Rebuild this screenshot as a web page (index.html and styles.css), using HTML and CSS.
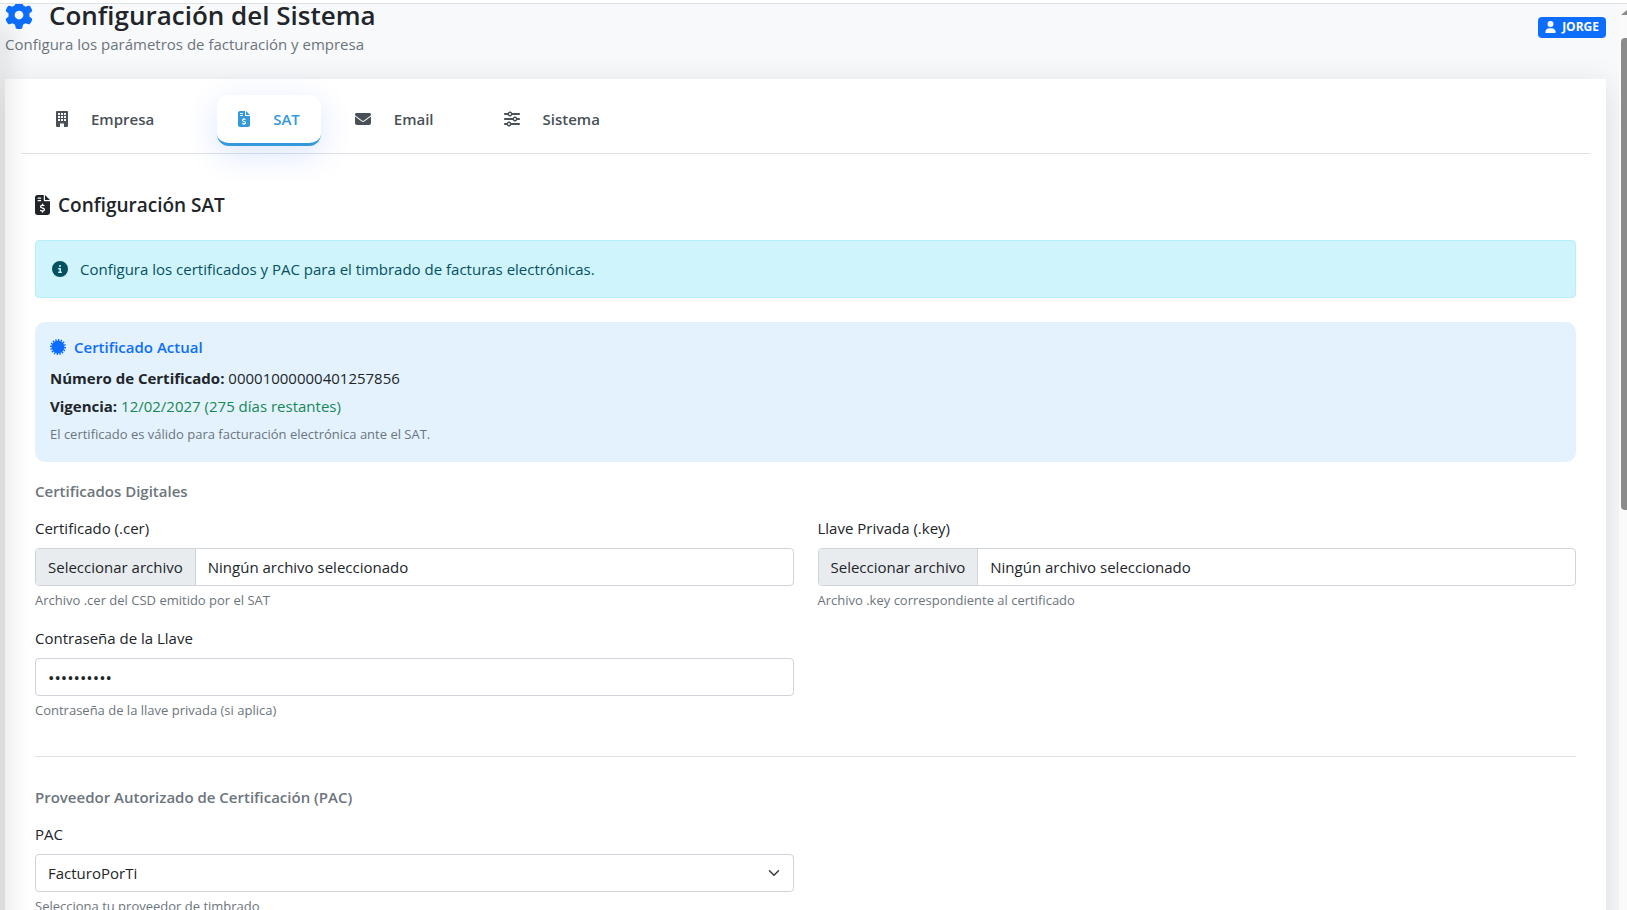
FILE: index.html
```html
<!DOCTYPE html>
<html lang="es">
<head>
    <meta charset="UTF-8">
    <meta name="viewport" content="width=device-width, initial-scale=1.0">
    <title>Configuración del Sistema</title>
    <link rel="stylesheet" href="styles.css">
</head>
<body>
    <!-- Shared icons -->
    <svg class="sprite" aria-hidden="true">
        <symbol id="icon-invoice" viewBox="0 0 384 512">
            <path d="M64 0C28.7 0 0 28.7 0 64V448c0 35.3 28.7 64 64 64H320c35.3 0 64-28.7 64-64V160H256c-17.7 0-32-14.3-32-32V0H64zM256 0V128H384L256 0zM64 80c0-8.800 7.200-16 16-16h64c8.800 0 16 7.200 16 16s-7.200 16-16 16H80c-8.800 0-16-7.200-16-16zm0 64c0-8.800 7.200-16 16-16h64c8.800 0 16 7.200 16 16s-7.200 16-16 16H80c-8.800 0-16-7.200-16-16zm128 72c8.800 0 16 7.200 16 16v17.300c8.500 1.200 16.700 3.100 24.100 5.100c8.500 2.300 13.600 11 11.300 19.600s-11 13.600-19.600 11.300c-11.100-3-22-5.200-32.100-5.300c-8.400-.1-17.400 1.800-23.600 5.500c-5.700 3.400-8.100 7.300-8.100 12.800c0 3.700 1.300 6.500 7.300 10.100c6.900 4.100 16.600 7.100 29.200 10.900l.5 .1c11.300 3.400 25.300 7.600 36.300 14.600c12.100 7.600 22.400 19.700 22.700 38.200c.3 19.300-9.600 33.300-22.900 41.600c-7.700 4.800-16.400 7.600-25.100 9.100V440c0 8.800-7.200 16-16 16s-16-7.200-16-16V422.200c-11.200-2.100-21.700-5.700-30.900-8.900c-2.100-.7-4.200-1.400-6.200-2.100c-8.400-2.800-12.900-11.900-10.100-20.200s11.900-12.900 20.200-10.100c2.500 .8 4.800 1.600 7.100 2.400c13.600 4.600 24.600 8.400 36.300 8.700c9.100 .3 17.900-1.700 23.700-5.300c5.100-3.200 7.900-7.300 7.800-14c-.1-4.600-1.800-7.800-7.700-11.600c-6.800-4.300-16.500-7.400-29-11.200l-1.600-.5c-11-3.300-24.300-7.300-34.800-13.700c-12-7.200-22.600-18.900-22.700-37.300c-.1-19.400 10.800-32.800 23.800-40.500c7.500-4.400 15.800-7.200 24.100-8.700V232c0-8.800 7.200-16 16-16z"/>
        </symbol>
    </svg>

    <div class="window">
        <main class="page">
            <header class="page-header">
                <div>
                    <h1>
                        <svg class="icon-gear" viewBox="0 0 512 512" aria-hidden="true"><path d="M495.9 166.6c3.200 8.700 .5 18.400-6.400 24.600l-43.300 39.400c1.100 8.300 1.700 16.800 1.700 25.400s-.6 17.100-1.700 25.400l43.300 39.400c6.900 6.200 9.600 15.900 6.400 24.600c-4.400 11.900-9.700 23.300-15.800 34.300l-4.700 8.100c-6.600 11-14 21.400-22.100 31.200c-5.900 7.200-15.700 9.600-24.500 6.800l-55.700-17.700c-13.400 10.300-28.200 18.900-44 25.400l-12.500 57.100c-2 9.100-9 16.300-18.200 17.800c-13.800 2.300-28 3.500-42.500 3.500s-28.700-1.200-42.500-3.500c-9.200-1.500-16.200-8.700-18.200-17.800l-12.500-57.100c-15.800-6.500-30.600-15.100-44-25.400L83.100 425.900c-8.800 2.800-18.600 .3-24.500-6.800c-8.100-9.800-15.500-20.200-22.100-31.200l-4.700-8.100c-6.100-11-11.400-22.400-15.800-34.300c-3.200-8.700-.5-18.400 6.400-24.600l43.300-39.400C64.600 273.100 64 264.600 64 256s.6-17.100 1.700-25.400L22.400 191.200c-6.900-6.200-9.600-15.900-6.400-24.600c4.400-11.900 9.700-23.300 15.800-34.300l4.700-8.100c6.600-11 14-21.400 22.100-31.200c5.900-7.200 15.700-9.600 24.500-6.800l55.700 17.700c13.400-10.300 28.200-18.900 44-25.400l12.500-57.100c2-9.100 9-16.300 18.200-17.800C227.300 1.200 241.500 0 256 0s28.700 1.200 42.500 3.500c9.200 1.500 16.200 8.700 18.200 17.800l12.500 57.100c15.800 6.500 30.600 15.100 44 25.400l55.700-17.700c8.800-2.800 18.600-.3 24.500 6.800c8.100 9.800 15.500 20.200 22.100 31.200l4.700 8.100c6.100 11 11.400 22.400 15.800 34.300zM256 336a80 80 0 1 0 0-160 80 80 0 1 0 0 160z"/></svg>
                        Configuración del Sistema
                    </h1>
                    <p class="subtitle">Configura los parámetros de facturación y empresa</p>
                </div>
                <span class="user-badge">
                    <svg viewBox="0 0 448 512" aria-hidden="true"><path d="M224 256A128 128 0 1 0 224 0a128 128 0 1 0 0 256zm-45.700 48C79.800 304 0 383.800 0 482.300C0 498.700 13.300 512 29.700 512H418.300c16.400 0 29.700-13.300 29.700-29.700C448 383.800 368.200 304 269.700 304H178.300z"/></svg>
                    JORGE
                </span>
            </header>

            <div class="card">
                <div class="tabs" role="tablist">
                    <button class="tab tab-first" type="button" role="tab">
                        <svg class="icon-narrow" viewBox="0 0 12 16" aria-hidden="true"><path fill-rule="evenodd" d="M1 0h10a1 1 0 0 1 1 1v14a1 1 0 0 1-1 1H8v-3.500H4V16H1a1 1 0 0 1-1-1V1a1 1 0 0 1 1-1zM2 2v2h2V2zM5 2v2h2V2zM8 2v2h2V2zM2 5v2h2V5zM5 5v2h2V5zM8 5v2h2V5zM2 8v2h2V8zM5 8v2h2V8zM8 8v2h2V8z"/></svg>
                        Empresa
                    </button>
                    <button class="tab active" type="button" role="tab" aria-selected="true">
                        <svg class="icon-narrow" aria-hidden="true"><use href="#icon-invoice"/></svg>
                        SAT
                    </button>
                    <button class="tab" type="button" role="tab">
                        <svg class="icon" viewBox="0 0 512 512" aria-hidden="true"><path d="M48 64C21.500 64 0 85.500 0 112c0 15.100 7.100 29.300 19.200 38.400L236.800 313.600c11.400 8.500 27 8.500 38.400 0L492.800 150.400c12.100-9.100 19.200-23.300 19.200-38.400c0-26.500-21.500-48-48-48H48zM0 176V384c0 35.300 28.700 64 64 64H448c35.300 0 64-28.700 64-64V176L294.400 339.200c-22.800 17.100-54 17.100-76.800 0L0 176z"/></svg>
                        Email
                    </button>
                    <button class="tab" type="button" role="tab">
                        <svg class="icon" viewBox="0 0 512 512" aria-hidden="true"><path d="M0 416c0 17.700 14.300 32 32 32l54.700 0c12.300 28.300 40.500 48 73.300 48s61-19.700 73.300-48L480 448c17.700 0 32-14.300 32-32s-14.300-32-32-32l-246.700 0c-12.300-28.300-40.500-48-73.300-48s-61 19.700-73.300 48L32 384c-17.700 0-32 14.300-32 32zm128 0a32 32 0 1 1 64 0 32 32 0 1 1 -64 0zM320 256a32 32 0 1 1 64 0 32 32 0 1 1 -64 0zm32-80c-32.800 0-61 19.700-73.300 48L32 224c-17.700 0-32 14.300-32 32s14.300 32 32 32l246.700 0c12.300 28.300 40.500 48 73.300 48s61-19.700 73.300-48l54.700 0c17.700 0 32-14.300 32-32s-14.300-32-32-32l-54.700 0c-12.300-28.300-40.500-48-73.300-48zM192 128a32 32 0 1 1 0-64 32 32 0 1 1 0 64zm73.300-64C253 35.700 224.800 16 192 16s-61 19.700-73.300 48L32 64C14.300 64 0 78.300 0 96s14.300 32 32 32l86.700 0c12.300 28.300 40.500 48 73.300 48s61-19.700 73.300-48L480 128c17.700 0 32-14.300 32-32s-14.300-32-32-32L265.300 64z"/></svg>
                        Sistema
                    </button>
                </div>

                <form class="tab-content">
                    <h2>
                        <svg class="icon-title" aria-hidden="true"><use href="#icon-invoice"/></svg>
                        Configuración SAT
                    </h2>

                    <div class="alert">
                        <svg class="icon" viewBox="0 0 512 512" aria-hidden="true"><path d="M256 512A256 256 0 1 0 256 0a256 256 0 1 0 0 512zM216 336h24V272H216c-13.300 0-24-10.700-24-24s10.700-24 24-24h48c13.300 0 24 10.700 24 24v88h8c13.300 0 24 10.700 24 24s-10.700 24-24 24H216c-13.300 0-24-10.700-24-24s10.700-24 24-24zm40-208a32 32 0 1 1 0 64 32 32 0 1 1 0-64z"/></svg>
                        Configura los certificados y PAC para el timbrado de facturas electrónicas.
                    </div>

                    <div class="cert-info">
                        <h3>
                            <svg class="icon" viewBox="-8 -8 16 16" aria-hidden="true">
                                <circle r="6.4"/>
                                <circle class="seal-spikes" r="7" pathLength="32"/>
                            </svg>
                            Certificado Actual
                        </h3>
                        <p><strong>Número de Certificado:</strong> 00001000000401257856</p>
                        <p><strong>Vigencia:</strong> <span class="text-success">12/02/2027 (275 días restantes)</span></p>
                        <small>El certificado es válido para facturación electrónica ante el SAT.</small>
                    </div>

                    <h4>Certificados Digitales</h4>
                    <div class="row">
                        <div class="field">
                            <label for="cerFile">Certificado (.cer)</label>
                            <div class="control file-control">
                                <span class="file-button">Seleccionar archivo</span>
                                <span class="file-name">Ningún archivo seleccionado</span>
                                <input type="file" id="cerFile" accept=".cer">
                            </div>
                            <small>Archivo .cer del CSD emitido por el SAT</small>
                        </div>
                        <div class="field">
                            <label for="keyFile">Llave Privada (.key)</label>
                            <div class="control file-control">
                                <span class="file-button">Seleccionar archivo</span>
                                <span class="file-name">Ningún archivo seleccionado</span>
                                <input type="file" id="keyFile" accept=".key">
                            </div>
                            <small>Archivo .key correspondiente al certificado</small>
                        </div>
                        <div class="field">
                            <label for="keyPassword">Contraseña de la Llave</label>
                            <input class="control" type="password" id="keyPassword" value="1234567890">
                            <small>Contraseña de la llave privada (si aplica)</small>
                        </div>
                    </div>

                    <hr>

                    <h4>Proveedor Autorizado de Certificación (PAC)</h4>
                    <div class="row">
                        <div class="field">
                            <label for="pac">PAC</label>
                            <div class="select-wrap">
                                <select class="control" id="pac">
                                    <option>FacturoPorTi</option>
                                </select>
                                <svg viewBox="0 0 16 16" aria-hidden="true"><path d="m2 5 6 6 6-6"/></svg>
                            </div>
                            <small>Selecciona tu proveedor de timbrado</small>
                        </div>
                    </div>
                </form>
            </div>
        </main>

        <div class="scrollbar" aria-hidden="true">
            <div class="scroll-arrow"></div>
            <div class="scroll-thumb"></div>
        </div>
        <div class="sidebar-edge"></div>
    </div>
</body>
</html>
```
FILE: styles.css
```css
* {
    box-sizing: border-box;
}
body {
    font-family: "Segoe UI", "Open Sans", "Noto Sans", sans-serif;
    font-size: 15px;
    line-height: 24px;
    margin: 0;
    padding-top: 3px;
    height: 100vh;
    overflow: hidden;
    color: #212529;
    background-color: #fff;
}
h1, h2, h3, h4, p {
    margin: 0;
    font-weight: 600;
}
svg {
    fill: currentColor;
    flex-shrink: 0;
}
small {
    display: block;
    font-size: 13px;
    line-height: 20px;
    color: #6c757d;
}
.sprite {
    display: none;
}
.window {
    position: relative;
    display: flex;
    height: 100%;
    overflow: hidden;
    border-top: 1px solid #dee2e6;
    background-color: #f8f9fa;
}
/* the page is scrolled a little under the top border */
.page {
    flex: 1;
    min-width: 0;
    margin-top: -6px;
    padding: 0 13px 0 5px;
}
.page-header {
    display: flex;
    justify-content: space-between;
    align-items: center;
    padding-bottom: 23px;
}
h1 {
    display: flex;
    align-items: center;
    gap: 16px;
    font-size: 26px;
    line-height: 34px;
}
.icon-gear {
    width: 28px;
    height: 28px;
    color: #0d6efd;
}
.subtitle {
    font-weight: 400;
    color: #6c757d;
}
.user-badge {
    display: flex;
    align-items: center;
    gap: 6px;
    height: 21px;
    padding: 0 7px;
    border-radius: 4px;
    font-size: 12px;
    font-weight: 700;
    color: #fff;
    background-color: #0d6efd;
}
.user-badge svg {
    width: 11px;
    height: 12px;
}
.card {
    padding: 16px;
    min-height: 100vh;
    background-color: #fff;
    box-shadow: 0 8px 32px rgba(31, 38, 60, 0.14);
}
.icon {
    width: 16px;
    height: 16px;
}
.icon-narrow {
    width: 12px;
    height: 16px;
}
.tabs {
    display: flex;
    gap: 30px;
    padding: 0 15px 7px;
    border-bottom: 1px solid #dee2e6;
}
.tab {
    display: flex;
    align-items: center;
    gap: 23px;
    height: 51px;
    padding: 0 20px;
    border: none;
    border-bottom: 3px solid transparent;
    border-radius: 12px;
    background: none;
    font: inherit;
    font-weight: 600;
    color: #495057;
    cursor: pointer;
}
.tab-first {
    margin-right: 13px;
}
.tab.active {
    margin-right: -16px;
    padding: 0 21px;
    color: #3498db;
    border-bottom-color: #3498db;
    background-color: #fff;
    box-shadow: 0 8px 32px rgba(13, 80, 253, 0.15);
}
.tab-content {
    padding: 35px 14px 0;
}
h2 {
    display: flex;
    align-items: center;
    gap: 8px;
    margin-bottom: 19px;
    font-size: 19px;
    line-height: 32px;
}
.icon-title {
    width: 15px;
    height: 20px;
}
.alert {
    display: flex;
    align-items: center;
    gap: 12px;
    margin-bottom: 24px;
    padding: 16px;
    border: 1px solid #b6effb;
    border-radius: 4px;
    color: #055160;
    background-color: #cff4fc;
}
.cert-info {
    margin-bottom: 19px;
    padding: 15px;
    border-radius: 10px;
    background-color: #e3f2fd;
}
.cert-info h3 {
    display: flex;
    align-items: center;
    gap: 8px;
    margin-bottom: 9px;
    font-size: 15px;
    line-height: 20px;
    color: #0d6efd;
}
.seal-spikes {
    fill: none;
    stroke: currentColor;
    stroke-width: 2;
    stroke-dasharray: 1;
}
.cert-info p {
    margin-bottom: 4px;
    font-weight: 400;
}
.cert-info small {
    padding-bottom: 1px;
    line-height: 24px;
}
.text-success {
    color: #198754;
}
h4 {
    margin-bottom: 15px;
    font-size: 15px;
    line-height: 20px;
    color: #6c757d;
}
.row {
    display: grid;
    grid-template-columns: 1fr 1fr;
    column-gap: 24px;
}
.field {
    margin-bottom: 16px;
}
.field label {
    display: block;
    margin-bottom: 8px;
}
.field small {
    margin-top: 4px;
}
.control {
    display: block;
    width: 100%;
    height: 38px;
    padding: 0 12px;
    border: 1px solid #ced4da;
    border-radius: 4px;
    background-color: #fff;
    font: inherit;
    color: #212529;
}
.control[type="password"] {
    font-size: 17px;
}
.file-control {
    position: relative;
    display: flex;
    align-items: center;
    padding: 0;
    overflow: hidden;
}
.file-button {
    padding: 6px 12px;
    border-right: 1px solid #ced4da;
    background-color: #e9ecef;
}
.file-name {
    padding: 0 12px;
}
.file-control input {
    position: absolute;
    inset: 0;
    width: 100%;
    opacity: 0;
    cursor: pointer;
}
.select-wrap {
    position: relative;
}
.select-wrap select {
    appearance: none;
}
.select-wrap svg {
    position: absolute;
    top: 13px;
    right: 14px;
    width: 12px;
    height: 12px;
    fill: none;
    stroke: #343a40;
    stroke-width: 2;
    stroke-linecap: round;
    stroke-linejoin: round;
    pointer-events: none;
}
hr {
    margin: 20px 0 30px;
    border: none;
    border-top: 1px solid #dee2e6;
}
.scrollbar {
    position: relative;
    width: 8px;
    padding-left: 2px;
    background-color: #fafafa;
}
.scroll-arrow {
    height: 34px;
    padding-top: 6px;
}
.scroll-arrow::before {
    content: "";
    display: block;
    border-left: 6px solid transparent;
    border-bottom: 5px solid #8b8b8b;
}
.scroll-thumb {
    height: 472px;
    border-radius: 4px 0 0 4px;
    background-color: #8b8b8b;
}
/* shadow that the side menu casts over the page */
.sidebar-edge {
    position: absolute;
    top: 20px;
    bottom: -40px;
    left: -10px;
    width: 10px;
    box-shadow: 4px 0 26px rgba(0, 0, 0, 0.22);
    pointer-events: none;
}
```
